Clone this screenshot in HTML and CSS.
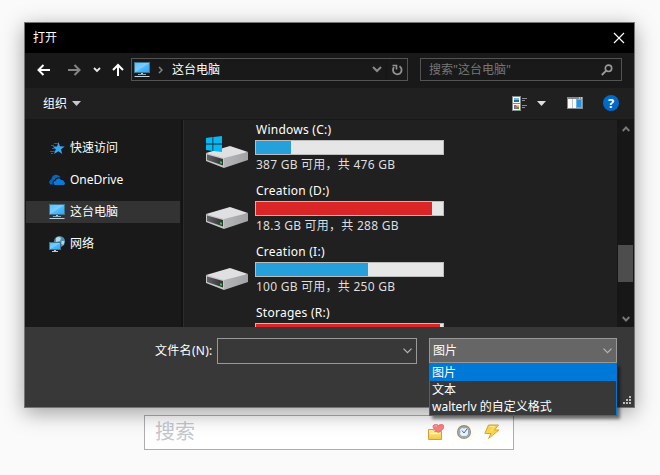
FILE: index.html
```html
<!DOCTYPE html>
<html lang="zh-CN">
<head>
<meta charset="utf-8">
<title>打开</title>
<link rel="stylesheet" href="styles.css">
</head>
<body>
<svg class="defs" width="0" height="0">
  <defs>
    <linearGradient id="screen" x1="0" y1="0" x2="1" y2="1"><stop offset="0" stop-color="#5cc0fd"/><stop offset=".48" stop-color="#7ccdff"/><stop offset=".54" stop-color="#4fbafd"/><stop offset="1" stop-color="#2fa9fa"/></linearGradient>
    <linearGradient id="side" x1="0" y1="0" x2="1" y2="0"><stop offset="0" stop-color="#b4b5b7"/><stop offset="1" stop-color="#a2a3a5"/></linearGradient>
    <linearGradient id="face" x1="0" y1="0" x2="1" y2="0"><stop offset="0" stop-color="#626366"/><stop offset="1" stop-color="#303133"/></linearGradient>
    <linearGradient id="gold" x1="0" y1="0" x2="0" y2="1"><stop offset="0" stop-color="#fff4a8"/><stop offset="1" stop-color="#f5c640"/></linearGradient>
    <symbol id="pc" viewBox="0 0 16 16">
      <path d="M0 0h16v11H0z" fill="#3d7590"/><path d="M1 1h14v9H1z" fill="url(#screen)"/>
      <path d="M7 11h2v1H7z" fill="#b9c9d2"/><path d="M4 12h8v1H4z" fill="#8fa8b5"/><path d="M1 14h14l1 1H0z" fill="#c4d3dc"/>
    </symbol>
    <symbol id="drive" viewBox="0 0 42 22">
      <path d="M0 7 24 0l18 6-24 9z" fill="#e0e0e3"/>
      <path d="M18 12 42 6v8l-24 8z" fill="url(#side)"/>
      <path d="M0 7l18 5v10L0 15z" fill="#c6c7c9"/>
      <path d="M1 8.500l16 4.500v6.500L1 14z" fill="url(#face)"/>
      <path d="M14 15.200l2 .5v2l-2-.5z" fill="#28d62c"/>
    </symbol>
  </defs>
</svg>

<main class="page">
  <div class="searchbar">
    <span class="searchbar-hint">搜索</span>
    <svg class="tool" viewBox="0 0 16 16"><path d="M.5 5.500h5l1 2h7v8H.5z" fill="url(#gold)" stroke="#df9b36"/><path d="M2 9.500h10" stroke="#fffbe0"/><path d="M10.500 8.500C7 6.500 5 4.500 5 2.500 5 0 9 0 10.500 1.500 12 0 16 0 16 2.500c0 2-2 4-5.500 6z" fill="#f78080" stroke="#ee5e62" stroke-width=".7"/><path d="M6.500 2.500q1-1.500 2.500-.5" stroke="#ffc4c4" fill="none"/></svg>
    <svg class="tool" viewBox="0 0 16 16"><circle cx="8" cy="8" r="6.300" fill="#e9f3fb" stroke="#a78f67" stroke-width="1.500"/><circle cx="8" cy="8" r="5" fill="none" stroke="#6d99c8"/><path d="M8 9l3-4M8 9L6 6.500" stroke="#406e9e" fill="none"/><path d="M8 3.500v1M8 12v1M3.500 8h1M12 8h1" stroke="#6d86a2"/></svg>
    <svg class="tool" viewBox="0 0 16 16"><path d="M4.500 1h10L10.500 6H15L4.500 14.500 7 9.500H.8z" fill="#fad947" stroke="#e5a235"/><path d="M5.500 2.500h5L7 7" stroke="#fff2a0" fill="none"/></svg>
  </div>
</main>

<section class="dialog">
  <header class="titlebar">
    <span>打开</span>
    <svg width="12" height="12" viewBox="0 0 12 12"><path d="M1 1l10 10M11 1L1 11" stroke="#fff" stroke-width="1.200"/></svg>
  </header>

  <nav class="navbar">
    <svg class="back" width="14" height="12" viewBox="0 0 14 12"><path d="M13 6H2M6.500 1L1.500 6l5 5" fill="none" stroke="#fff" stroke-width="2"/></svg>
    <svg class="forward" width="14" height="12" viewBox="0 0 14 12"><path d="M1 6h11M7.500 1l5 5-5 5" fill="none" stroke="#858585" stroke-width="2"/></svg>
    <svg class="recent" width="8" height="6" viewBox="0 0 8 6"><path d="M1 1l3 3 3-3" fill="none" stroke="#e8e8e8" stroke-width="1.800"/></svg>
    <svg class="up" width="12" height="14" viewBox="0 0 12 14"><path d="M6 13V2M1 7l5-5 5 5" fill="none" stroke="#fff" stroke-width="2"/></svg>
    <div class="address">
      <svg class="address-pc" width="16" height="16"><use href="#pc"/></svg>
      <svg class="crumb" width="5" height="8" viewBox="0 0 5 8"><path d="M1 1l3 3-3 3" fill="none" stroke="#858585" stroke-width="1.500"/></svg>
      <span class="address-text">这台电脑</span>
      <svg class="drop" width="10" height="7" viewBox="0 0 10 7"><path d="M1 1l4 4 4-4" fill="none" stroke="#8a8a8a" stroke-width="2"/></svg>
      <span class="reload"><svg width="12" height="12" viewBox="0 0 12 12"><path d="M8.500 2.300A4.300 4.300 0 1 1 3 3.200" fill="none" stroke="#929292" stroke-width="1.800"/><path d="M1.500 1.500h4v4" fill="none" stroke="#929292" stroke-width="1.600"/></svg></span>
    </div>
    <div class="search">
      <span>搜索"这台电脑"</span>
      <svg width="12" height="12" viewBox="0 0 12 12"><circle cx="7.500" cy="4.300" r="3.200" fill="none" stroke="#9a9a9a" stroke-width="1.600"/><path d="M5.200 6.600L.8 11" stroke="#9a9a9a" stroke-width="1.900"/></svg>
    </div>
  </nav>

  <div class="toolbar">
    <span class="organize">组织</span>
    <svg class="tri organize-tri" width="9" height="5" viewBox="0 0 9 5"><path d="M0 0h9L4.500 5z" fill="#c8c8c8"/></svg>
    <svg class="view" width="15" height="15" viewBox="0 0 15 15"><path d="M0 0h9v15H0z" fill="#858b8d"/><path d="M1 1h7v6H1zM1 8h7v6H1z" fill="#fff"/><path d="M2 2h5v2H2z" fill="#72b9ed"/><path d="M2 4h5v2H2z" fill="#286a98"/><path d="M2 9h2v4H2z" fill="#7c65a8"/><path d="M4 9h3v2H4z" fill="#e9b43a"/><path d="M4 11h3v2H4z" fill="#3c9947"/><path d="M3 10h2v2H3z" fill="#df6943"/><path d="M10 2.500h5M10 4.500h3M10 9.500h5M10 11.500h3" stroke="#8c8c8c"/></svg>
    <svg class="tri" width="9" height="5" viewBox="0 0 9 5"><path d="M0 0h9L4.500 5z" fill="#dedede"/></svg>
    <svg class="pane" width="16" height="12" viewBox="0 0 16 12"><path d="M0 0h16v12H0z" fill="#84898c"/><path d="M1 2h4v9H1zM5.500 2H9v9H5.500z" fill="#fafafa"/><path d="M9 2h6v9H9z" fill="#5db6ef"/><path d="M10 3h4v7h-4z" fill="#2c91dc"/><path d="M12 .5h1v1h-1zM14 .5h1v1h-1z" fill="#fff"/></svg>
    <span class="help">?</span>
  </div>

  <div class="body">
    <aside class="tree">
      <div class="node"><svg width="16" height="16" viewBox="0 0 16 16"><path d="M9.500 2l1.400 4.300 4.800.2-3.700 2.700L13.200 14 9.400 11.300 5 14l1.800-4.800L3.700 6.500H8z" fill="#37a9f2"/><path d="M5 3.500h4M2 5.500h3M3 8.500h3M1 11.500h5M2 13.500h2" stroke="#1d6496"/></svg><span>快速访问</span></div>
      <div class="node"><svg width="16" height="16" viewBox="0 0 16 16"><path d="M1.500 12.500C-.5 11 0 8 2.500 7.500 2.500 4 6.500 1.500 9.500 3.500c1 .5 1.500 1 2 2H10C7.500 5 6 6.500 5.500 8 3.500 8.500 3 11 4 12.500z" fill="#0467be"/><path d="M6 13c-2-.5-2-4 .5-4C7 6 11 5.500 12.300 8c2-.2 2.700 1 2.600 2 1.500.5 1.500 3-.4 3z" fill="#0a7ada"/></svg><span>OneDrive</span></div>
      <div class="node selected"><svg width="16" height="16"><use href="#pc"/></svg><span>这台电脑</span></div>
      <div class="node"><svg width="16" height="16" viewBox="0 0 16 16"><circle cx="10.500" cy="5.500" r="5.500" fill="#4c91ae"/><path d="M7 2q3-2 5 0l-1 3-4 1zM12.500 5l3 0-1 4-2-1z" fill="#b4d9e5"/><path d="M0 6h12v8H0z" fill="#3d7590"/><path d="M1 7h10v6H1z" fill="url(#screen)"/><path d="M5 14h2v1h2v1H3v-1h2z" fill="#b9c9d2"/></svg><span>网络</span></div>
    </aside>
    <div class="files">
      <div class="drive"><div class="drive-icon"><svg class="disk" width="42" height="22"><use href="#drive"/></svg><svg class="winlogo" width="16" height="16" viewBox="0 0 16 16"><path d="M0 2l6.500-1v6.500H0zM7.300.9L16 0v7.500H7.300zM0 8.400h6.500V15L0 14zM7.300 8.400H16V16l-8.700-.9z" fill="#05b8f5"/></svg></div><div class="drive-info"><span class="name">Windows (C:)</span><div class="meter"><div class="fill" style="width:35px"></div></div><span class="free">387 GB 可用，共 476 GB</span></div></div>
      <div class="drive"><div class="drive-icon"><svg class="disk" width="42" height="22"><use href="#drive"/></svg></div><div class="drive-info"><span class="name">Creation (D:)</span><div class="meter"><div class="fill full" style="width:176px"></div></div><span class="free">18.3 GB 可用，共 288 GB</span></div></div>
      <div class="drive"><div class="drive-icon"><svg class="disk" width="42" height="22"><use href="#drive"/></svg></div><div class="drive-info"><span class="name">Creation (I:)</span><div class="meter"><div class="fill" style="width:112px"></div></div><span class="free">100 GB 可用，共 250 GB</span></div></div>
      <div class="drive"><div class="drive-icon"></div><div class="drive-info"><span class="name">Storages (R:)</span><div class="meter"><div class="fill full" style="width:184px"></div></div></div></div>
    </div>
    <div class="scroll">
      <svg width="8" height="6" viewBox="0 0 8 6"><path d="M.7 5L4 1.500 7.300 5" fill="none" stroke="#777" stroke-width="1.900"/></svg>
      <div class="thumb"></div>
      <svg class="scroll-down" width="8" height="6" viewBox="0 0 8 6"><path d="M.7 1L4 4.500 7.300 1" fill="none" stroke="#777" stroke-width="1.900"/></svg>
    </div>
  </div>

  <footer class="footer">
    <label class="file-label">文件名(N):</label>
    <div class="combo filename"><svg width="9" height="6" viewBox="0 0 9 6"><path d="M.5.7l4 4 4-4" fill="none" stroke="#b5b5b5" stroke-width="1.200"/></svg></div>
    <div class="combo filter"><span>图片</span><svg width="9" height="6" viewBox="0 0 9 6"><path d="M.5.7l4 4 4-4" fill="none" stroke="#b5b5b5" stroke-width="1.200"/></svg>
      <div class="menu"><div class="option active">图片</div><div class="option">文本</div><div class="option">walterlv 的自定义格式</div></div>
    </div>
    <svg class="grip" width="8" height="8" viewBox="0 0 8 8"><path d="M6 0h2v2H6zM3 3h2v2H3zM6 3h2v2H6zM0 6h2v2H0zM3 6h2v2H3zM6 6h2v2H6z" fill="#bcbcbc"/></svg>
  </footer>
</section>
</body>
</html>
```
FILE: styles.css
```css
* { box-sizing: border-box; }
body {
  margin: 0;
  width: 660px;
  height: 475px;
  overflow: hidden;
  background: #fafafa;
  color: #fff;
  font: 12px/16px "Noto Sans", "Noto Sans CJK SC", sans-serif;
  white-space: nowrap;
}
svg { display: block; flex: none; }
.defs { position: absolute; }

.page { padding: 415px 0 0 144px; }
.searchbar {
  display: flex;
  align-items: center;
  width: 370px;
  height: 35px;
  padding: 0 13px 2px 10px;
  background: #fff;
  border: 1px solid #aeaeae;
}
.searchbar-hint { margin-right: auto; font-size: 20px; line-height: 30px; color: #c4c7ce; }
.tool { width: 16px; height: 16px; margin-left: 12px; }

.dialog {
  position: absolute;
  left: 24px;
  top: 22px;
  width: 611px;
  height: 386px;
  display: flex;
  flex-direction: column;
  border: 1px solid #747474;
  background: #191919;
  box-shadow: 0 5px 20px rgba(0, 0, 0, .36);
}
.titlebar {
  display: flex;
  align-items: center;
  justify-content: space-between;
  height: 30px;
  padding: 0 9px 0 8px;
  background: #000;
}

.navbar { display: flex; align-items: center; height: 35px; padding: 0 0 2px 12px; background: #191919; }
.forward { margin-left: 16px; }
.recent { margin-left: 12px; }
.up { margin-left: 11px; }
.address, .search { display: flex; align-items: center; height: 23px; border: 1px solid #535353; }
.address { width: 277px; margin-left: 7px; }
.address-pc { margin-left: 2px; }
.crumb { margin-left: 8px; }
.address-text { margin-left: 9px; margin-right: auto; }
.reload { display: flex; align-items: center; height: 21px; margin-left: 4px; padding: 0 4px; border-left: 1px solid #151515; }
.search { width: 202px; margin-left: 12px; padding: 0 8px; justify-content: space-between; color: #777; }

.toolbar { display: flex; align-items: center; height: 32px; padding: 0 15px 1px 18px; background: #202020; border-bottom: 1px solid #171717; }
.organize { padding-top: 1px; }
.organize-tri { margin-left: 5px; margin-right: auto; }
.view { margin-right: 10px; }
.pane { margin: 0 20px 0 21px; }
.help { width: 16px; height: 16px; border-radius: 50%; background: #0069ca; text-align: center; font-size: 13px; font-weight: 700; line-height: 16px; }

.body { display: flex; height: 207px; overflow: hidden; }
.tree { width: 158px; padding: 17px 1px 0 1px; background: #191919; border-right: 2px solid #131313; }
.node { display: flex; align-items: center; gap: 5px; height: 22px; margin-bottom: 10px; padding-left: 23px; }
.selected { background: #333; }
.files { flex: 1; padding: 2px 0 0 22px; background: #202020; border-left: 1px solid #2c2c2c; }
.drive { display: flex; height: 61px; }
.drive-icon { position: relative; width: 49px; padding-top: 24px; }
.winlogo { position: absolute; left: 0; top: 14px; }
.name, .free { display: block; padding-left: 1px; }
.name { height: 18px; letter-spacing: .25px; }
.meter { width: 189px; height: 15px; background: #e6e6e6; border: 1px solid #bcbcbc; }
.fill { height: 13px; background: #26a0da; }
.full { background: #da2626; }
.free { margin-top: 2px; color: #dedede; letter-spacing: .25px; }
.scroll { width: 17px; display: flex; flex-direction: column; align-items: center; padding: 6px 0 5px; background: #171717; }
.thumb { width: 15px; height: 37px; margin-top: 113px; background: #4d4d4d; }
.scroll-down { margin-top: auto; }

.footer { position: relative; display: flex; align-items: flex-start; height: 80px; padding: 11px 0 0 130px; background: #383838; }
.file-label { width: 62px; line-height: 26px; letter-spacing: .3px; }
.combo { display: flex; align-items: center; height: 26px; border: 1px solid #999; }
.filename { width: 200px; justify-content: flex-end; padding-right: 4px; }
.filter { position: relative; width: 188px; height: 25px; margin-left: 12px; padding: 0 4px 0 3px; justify-content: space-between; background: #666; }
.menu { position: absolute; left: -1px; top: 24px; z-index: 2; width: 188px; height: 53px; background: #383838; border: 1px solid #0078d7; box-shadow: 3px 3px 3px rgba(0, 0, 0, .5); }
.option { height: 17px; padding-left: 2px; line-height: 17px; }
.active { background: #0078d7; }
.grip { position: absolute; right: 3px; bottom: 3px; }
```
